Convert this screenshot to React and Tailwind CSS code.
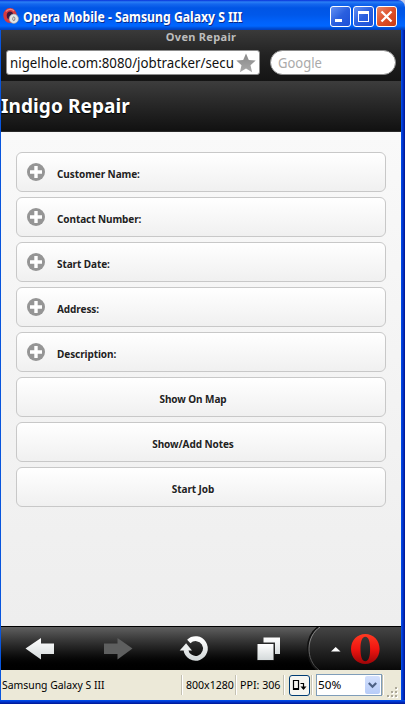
const details = ['Customer Name:', 'Contact Number:', 'Start Date:', 'Address:', 'Description:'];
const buttons = ['Show On Map', 'Show/Add Notes', 'Start Job'];

const rowClass =
  'flex h-10 items-center rounded-[6px] border border-[#c8c8c8] bg-linear-to-b from-white to-[#f0f0f0] text-[10px] font-bold tracking-[-0.08px] text-[#222] [text-shadow:0_1px_0_#fff]';

function AppIcon() {
  return (
    <svg width="16" height="16" viewBox="0 0 16 16" className="mt-[2px] shrink-0">
      <ellipse cx="7" cy="7.500" rx="5" ry="5.800" fill="#3b1740" stroke="#d63a40" strokeWidth="3.400" />
      <path d="M3 3.500C5 .8 9 .8 11 3" fill="none" stroke="#f08a84" strokeWidth="1.200" />
      <circle cx="10.800" cy="10.800" r="4.700" fill="#e4e4e4" stroke="#999" strokeWidth=".6" />
      <ellipse cx="10.800" cy="10.800" rx="1.100" ry="1.900" fill="#eee" stroke="#777" strokeWidth=".9" />
    </svg>
  );
}

function WindowButton({ close, children }) {
  return (
    <div
      className={
        'h-[21px] w-[21px] rounded-[3px] border border-white ' +
        (close
          ? 'bg-linear-to-br from-[#ea8667] via-[#dd4f29] to-[#c83a12]'
          : 'bg-linear-to-br from-[#6490f2] via-[#2a5fdf] to-[#1c50d8]')
      }
    >
      <svg width="19" height="19" viewBox="0 0 19 19">{children}</svg>
    </div>
  );
}

function TitleBar() {
  return (
    <div className="flex h-[30px] items-center rounded-tr-[7px] bg-[linear-gradient(#0831d9_0,#2a80f5_2px,#1467ee_4px,#0055e5_8px,#0058ea_15px,#0062fb_22px,#0066ff_26px,#0050d8_28px,#003fc0_30px)] pr-2 pl-[3px]">
      <AppIcon />
      <div className="ml-[4px] h-[30px] w-[222px] text-[14px] leading-[34px] font-bold whitespace-nowrap text-white [text-shadow:1px_1px_0_#0a2a8c]">
        <span className="inline-block origin-left scale-x-[0.872]">Opera Mobile - Samsung Galaxy S III</span>
      </div>
      <div className="mt-[3px] ml-auto flex gap-[2px]">
        <WindowButton>
          <rect x="4" y="12" width="7" height="3" fill="#fff" />
        </WindowButton>
        <WindowButton>
          <path d="M4 4h11v11H4zM5 7v7h9V7z" fill="#fff" fillRule="evenodd" />
        </WindowButton>
        <WindowButton close>
          <path d="M4.500 4.500l10 10M14.500 4.500l-10 10" stroke="#fff" strokeWidth="2.300" />
        </WindowButton>
      </div>
    </div>
  );
}

function BrowserBar() {
  return (
    <div className="h-[51px] bg-linear-to-b from-[#3a3a3a] via-[#222] to-[#141414]">
      <div className="h-5 text-center text-[11px] leading-[13px] font-bold tracking-[0.3px] text-[#bdbdbd]">
        Oven Repair
      </div>
      <div className="flex gap-[10px] pl-[5px]">
        <div className="flex h-[25px] w-[254px] items-center rounded-[3px] border border-[#8c8c8c] bg-white pr-[3px] pl-[3px]">
          <span className="w-[226px] text-[14px] leading-[23px] whitespace-nowrap text-[#111]">
            <span className="inline-block origin-left scale-x-[0.948]">nigelhole.com:8080/jobtracker/secu</span>
          </span>
          <svg width="20" height="20" viewBox="0 0 20 20" className="shrink-0">
            <defs>
              <linearGradient id="star" x2="0" y2="1">
                <stop stopColor="#888" />
                <stop offset="1" stopColor="#aaa" />
              </linearGradient>
            </defs>
            <path d="M10 .5l2.800 6.400 6.900.6-5.200 4.700 1.600 7L10 15.600l-6.100 3.600 1.600-7L.3 7.500l6.900-.6z" fill="url(#star)" />
          </svg>
        </div>
        <div className="h-[25px] w-[126px] rounded-full border border-[#8c8c8c] bg-white pl-[7px] text-[14px] leading-[23px] text-[#aaa]">
          <span className="inline-block origin-left scale-x-[0.93]">Google</span>
        </div>
      </div>
    </div>
  );
}

function PlusIcon() {
  return (
    <svg width="18" height="18" viewBox="0 0 18 18" className="-mt-[1px] ml-[10px] shrink-0">
      <circle cx="9" cy="9" r="9" fill="#959595" />
      <path d="M9 3v12M3 9h12" stroke="#fff" strokeWidth="3.400" />
    </svg>
  );
}

function Toolbar() {
  return (
    <div className="h-[44px] border-t border-black bg-linear-to-b from-[#606060] to-black">
      <svg width="400" height="43" viewBox="1 627 400 43">
        <defs>
          <linearGradient id="metal" x2="0" y2="1">
            <stop stopColor="#fff" />
            <stop offset="1" stopColor="#d4d9da" />
          </linearGradient>
          <linearGradient id="red" x2="0" y2="1">
            <stop stopColor="#ff3a22" />
            <stop offset=".5" stopColor="#f01510" />
            <stop offset="1" stopColor="#9c0508" />
          </linearGradient>
          <linearGradient id="menu" x2="0" y2="1">
            <stop stopColor="#454545" />
            <stop offset="1" stopColor="#080808" />
          </linearGradient>
          <linearGradient id="rim" x2="0" y2="1">
            <stop stopColor="#999" />
            <stop offset="1" stopColor="#444" />
          </linearGradient>
        </defs>
        <path d="M25.500 648.500L41 638v5.500h13v10.500H41v5.500z" fill="url(#metal)" />
        <path d="M132.500 648.500L117.500 638v5.500H104v10.500h13.500v5.500z" fill="#5e5f5f" />
        <path d="M188.800 641.400A9.800 9.800 0 1 1 185.900 650" fill="none" stroke="url(#metal)" strokeWidth="4.800" />
        <path d="M179.700 650.500l6.400-7.300 5.900 7.300z" fill="#edf0f0" />
        <path d="M263.500 637.500H280V654h-5v-11.500h-11.500z" fill="url(#metal)" />
        <rect x="257" y="643.500" width="17" height="17" fill="#222" />
        <rect x="257.500" y="644" width="16" height="16" fill="url(#metal)" />
        <path d="M320 627C306 636 305 660 319 670H401V627z" fill="url(#menu)" />
        <path d="M318.500 627C305 636 304 660 317.500 670" fill="none" stroke="#111" strokeWidth="2" />
        <path d="M320 627C306 636 305 660 319 670" fill="none" stroke="url(#rim)" />
        <path d="M331 651.500l4.700-4.500 4.800 4.500z" fill="#fff" />
        <path
          d="M365.300 634c8.200 0 14.300 6.500 14.300 15s-6.100 15-14.300 15S351 657.500 351 649s6.100-15 14.300-15zm0 2.800c-3.500 0-4.800 5-4.800 12.200s1.300 12.200 4.800 12.200 4.800-5 4.800-12.200-1.300-12.200-4.800-12.200z"
          fill="url(#red)"
          fillRule="evenodd"
        />
      </svg>
    </div>
  );
}

function Divider() {
  return <div className="h-5 w-[2px] shrink-0 border-r border-l border-r-white border-l-[#c4c1b2]" />;
}

function StatusBar() {
  return (
    <div className="flex h-[30px] items-center bg-[#ece9d8] pl-[1px] text-[11px] whitespace-nowrap text-black">
      <span className="w-[179px]">
        <span className="inline-block origin-left scale-x-[0.945]">Samsung Galaxy S III</span>
      </span>
      <Divider />
      <span className="w-[52px] pl-[3px]">
        <span className="inline-block origin-left scale-x-[0.96]">800x1280</span>
      </span>
      <Divider />
      <span className="w-[46px] pl-[3px]">
        <span className="inline-block origin-left scale-x-[0.97]">PPI: 306</span>
      </span>
      <Divider />
      <div className="ml-[4px] flex h-[21px] w-[21px] items-center justify-center rounded-[3px] border border-[#003c74] bg-[#f7f6f1]">
        <svg width="15" height="13" viewBox="0 0 15 13">
          <path d="M1.500 1.500h5v9h-5zM1 9.500h6M8.500 4.500h3v4" fill="none" stroke="#000" strokeWidth="1.200" />
          <path d="M8.500 7.500h6l-3 3.500z" />
        </svg>
      </div>
      <div className="ml-[1px]"><Divider /></div>
      <div className="ml-[3px] flex h-[22px] w-[66px] items-center border border-[#7f9db9] bg-white pr-[1px] pl-[1px]">
        <span className="inline-block origin-left scale-x-[1.07]">50%</span>
        <div className="ml-auto flex h-[18px] w-[15px] items-center justify-center rounded-[2px] bg-linear-to-b from-[#d3e0fd] to-[#b7ccf8]">
          <svg width="9" height="7" viewBox="0 0 9 7">
            <path d="M.8 1l3.700 3.700L8.200 1" fill="none" stroke="#4d6185" strokeWidth="2.200" />
          </svg>
        </div>
      </div>
      <Divider />
      <svg width="12" height="12" viewBox="0 0 12 12" className="mr-[2px] mb-[1px] ml-auto self-end">
        <path d="M8 0h2v2H8zM4 4h2v2H4zM8 4h2v2H8zM0 8h2v2H0zM4 8h2v2H4zM8 8h2v2H8z" transform="translate(1 1)" fill="#fff" />
        <path d="M8 0h2v2H8zM4 4h2v2H4zM8 4h2v2H8zM0 8h2v2H0zM4 8h2v2H4zM8 8h2v2H8z" fill="#aca899" />
      </svg>
    </div>
  );
}

export default function App() {
  return (
    <div className="h-[704px] w-[405px] overflow-hidden bg-[#c5cbe8] font-['Noto_Sans','Open_Sans',sans-serif]">
      <TitleBar />
      <div className="flex">
        <div className="w-px bg-[#0855dd]" />
        <div className="w-[400px]">
          <BrowserBar />
          <header className="h-[51px] border-t border-b border-t-[#3c3c3c] border-b-[#2a2a2a] bg-linear-to-b from-[#3c3c3c] to-[#111] text-[19px] leading-[48px] font-bold tracking-[0.1px] text-white [text-shadow:0_1px_1px_#000]">
            Indigo Repair
          </header>
          <main className="flex h-[494px] flex-col gap-[5px] bg-linear-to-b from-[#f9f9f9] to-[#eee] pt-5 pr-[15px] pl-[15px]">
            {details.map((label) => (
              <div key={label} className={rowClass}>
                <PlusIcon />
                <span className="mt-[5px] ml-[12px]">{label}</span>
              </div>
            ))}
            {buttons.map((label) => (
              <button key={label} className={rowClass + ' justify-center pt-[5px] pr-[16px]'}>
                {label}
              </button>
            ))}
          </main>
          <Toolbar />
          <StatusBar />
        </div>
        <div className="w-1 bg-linear-to-r from-[#0050ee] via-[#0030c8] to-[#001590]" />
      </div>
      <div className="h-1 bg-linear-to-b from-[#0050ee] via-[#0030c8] to-[#001590]" />
    </div>
  );
}
